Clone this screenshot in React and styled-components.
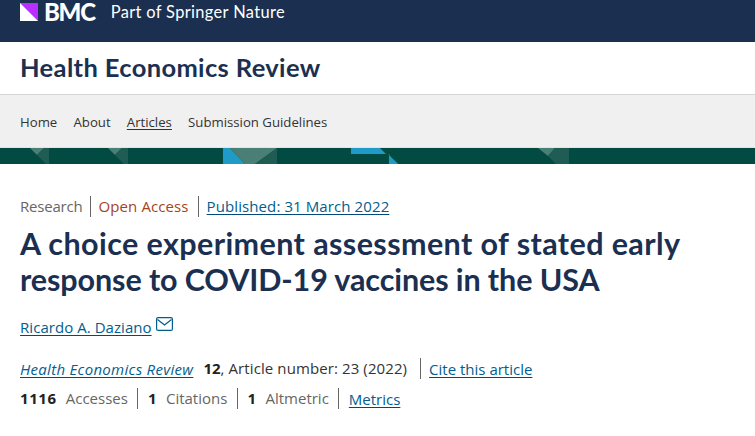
import React from "react";
import styled, { createGlobalStyle } from "styled-components";

const Global = createGlobalStyle`
  html, body { margin: 0; padding: 0; background: #fff; overflow: hidden; }
  body { font-family: "Open Sans", "Noto Sans", sans-serif; }
`;
const TopBar = styled.header`
  height: 42px; background: #1b3051; box-sizing: border-box; padding: 0 0 0 20px;
  display: flex; align-items: flex-start; color: #fff;
`;
const LogoMark = styled.svg`width: 18px; height: 18px; margin-top: 3px; flex: none;`;
const LogoText = styled.span`
  font: 900 24px/24px Lato, sans-serif; margin-left: 6px; letter-spacing: -1.3px; white-space: nowrap;
`;
const Tagline = styled.span`
  font: 400 16.4px/24px Lato, sans-serif; margin-left: 16px; letter-spacing: .36px; white-space: nowrap;
`;
const JournalBar = styled.div`
  height: 53px; box-sizing: border-box; padding: 8px 0 0 20px; border-bottom: 1px solid #d5d5d5;
  background: #fff;
`;
const Journal = styled.div`
  font: 700 25.5px/34px Lato, sans-serif; color: #1b3051; letter-spacing: .36px;
`;
const Nav = styled.nav`
  height: 53px; background: #f0f0f0; display: flex; align-items: center; gap: 16.2px; padding: 2px 0 0 20px;
  box-sizing: border-box; border-bottom: 1px solid #e4e4e4;
`;
const NavLink = styled.span`
  font-size: 13.2px; line-height: 18px; color: #333;
  text-decoration: ${p => (p.$active ? "underline" : "none")};
  text-underline-offset: 2px;
`;
const Band = styled.svg`display: block; width: 755px; height: 16px;`;
const Main = styled.main`padding: 32px 0 0 20px;`;
const MetaRow = styled.div`display: flex; align-items: center; height: 21px;`;
const MetaItem = styled.span`
  font-size: 15px; line-height: 21px; color: ${p => p.$color || "#666"};
  padding-right: ${p => p.$pad || 8}px; margin-right: 8px;
  letter-spacing: ${p => p.$track || 0}px;
  border-right: ${p => (p.$last ? "none" : "1px solid #666")};
`;
const Link = styled.a`
  color: #025e8d; text-decoration: underline; text-decoration-color: #00497a;
  text-underline-offset: 2px; font-style: ${p => (p.$italic ? "italic" : "normal")};
  letter-spacing: ${p => p.$track || 0}px;
`;
const Title = styled.h1`
  margin: 8px 0 0; font: 700 30.5px/36px Lato, sans-serif; color: #1b3051;
`;
const TitleLine = styled.span`
  display: block; white-space: nowrap; letter-spacing: ${p => p.$track}px;
`;
const Authors = styled.div`
  margin-top: 20px; font-size: 15px; line-height: 21px; display: flex; align-items: flex-start;
`;
const MailIcon = styled.svg`width: 17px; height: 14px; margin: 0 0 0 4px;`;
const CiteRow = styled.div`
  margin-top: 20px; display: flex; align-items: center; height: 21px; font-size: 15px; color: #333;
`;
const Strong = styled.b`font-weight: 700; color: #222; margin-right: ${p => p.$gap || 0}px; letter-spacing: ${p => p.$track || 0}px;`;
const CiteText = styled.span`
  line-height: 21px; white-space: pre; padding-right: 13px; margin-right: 8px; letter-spacing: .1px;
  border-right: 1px solid #666; margin-left: 10px;
`;
const Stats = styled.div`margin-top: 9px; display: flex; align-items: center; height: 21px; font-size: 15px;`;
const Stat = styled.span`
  line-height: 21px; color: #666; padding-right: 9.5px; margin-right: 9.5px;
  border-right: 1px solid #666;
`;

export default function App() {
  return (
    <>
      <Global />
      <TopBar>
        <LogoMark viewBox="0 0 18 18">
          <rect width="18" height="18" fill="#fff" />
          <polygon points="0,0 18,0 18,18" fill="#b92fff" />
        </LogoMark>
        <LogoText>BMC</LogoText>
        <Tagline>Part of Springer Nature</Tagline>
      </TopBar>
      <JournalBar><Journal>Health Economics Review</Journal></JournalBar>
      <Nav>
        <NavLink>Home</NavLink>
        <NavLink>About</NavLink>
        <NavLink $active>Articles</NavLink>
        <NavLink>Submission Guidelines</NavLink>
      </Nav>
      <Band viewBox="0 0 755 16">
        <rect width="755" height="16" fill="#024b43" />
        <polygon points="30,0 37,7 44,0" fill="#4a7f76" />
        <polygon points="37,7 44,0 49,0 49,16 46,16" fill="#1f5c53" />
        <polygon points="108,0 115,7 122,0" fill="#4a7f76" />
        <polygon points="115,7 122,0 128,0 128,16 124,16" fill="#1f5c53" />
        <polygon points="223,0 230,0 245,16 223,16" fill="#1f9bc7" />
        <polygon points="230,0 245,16 255,16 277,0" fill="#4a7f76" />
        <polygon points="255,16 277,0 277,16" fill="#1f5c53" />
        <polygon points="351,0 351,6 386,6 380,0" fill="#1f9bc7" />
        <polygon points="380,0 386,6 390,6 390,16 399,16" fill="#1f5c53" />
        <polygon points="389,7 389,16 398,16" fill="#1f9bc7" />
        <polygon points="538,0 548,8 555,0" fill="#4a7f76" />
        <polygon points="548,8 555,0 569,0 569,16 556,16" fill="#1f5c53" />
      </Band>
      <Main>
        <MetaRow>
          <MetaItem $track={-0.2} $pad={7}>Research</MetaItem>
          <MetaItem $color="#a6431b" $track={0.1} $pad={9}>Open Access</MetaItem>
          <MetaItem $last><Link $track={0.1}>Published: 31 March 2022</Link></MetaItem>
        </MetaRow>
        <Title>
          <TitleLine $track={0.4}>A choice experiment assessment of stated early</TitleLine>
          <TitleLine $track={-0.1}>response to COVID-19 vaccines in the USA</TitleLine>
        </Title>
        <Authors>
          <Link $track={0.05}>Ricardo A. Daziano</Link>
          <MailIcon viewBox="0 0 17 14" fill="none" stroke="#025e8d" strokeWidth="1.2">
            <rect x=".6" y=".6" width="15.8" height="12.8" rx="1.5" />
            <path d="M1.5 2.5 8.5 8 15.5 2.5" />
          </MailIcon>
        </Authors>
        <CiteRow>
          <Link $italic $track={0.3}>Health Economics Review</Link>
          <CiteText><Strong>12</Strong>, Article number: 23 (2022)</CiteText>
          <Link>Cite this article</Link>
        </CiteRow>
        <Stats>
          <Stat><Strong $gap={9} $track={0.6}>1116</Strong>Accesses</Stat>
          <Stat><Strong $gap={9.5}>1</Strong>Citations</Stat>
          <Stat><Strong $gap={9.5}>1</Strong>Altmetric</Stat>
          <Link>Metrics</Link>
        </Stats>
      </Main>
    </>
  );
}
